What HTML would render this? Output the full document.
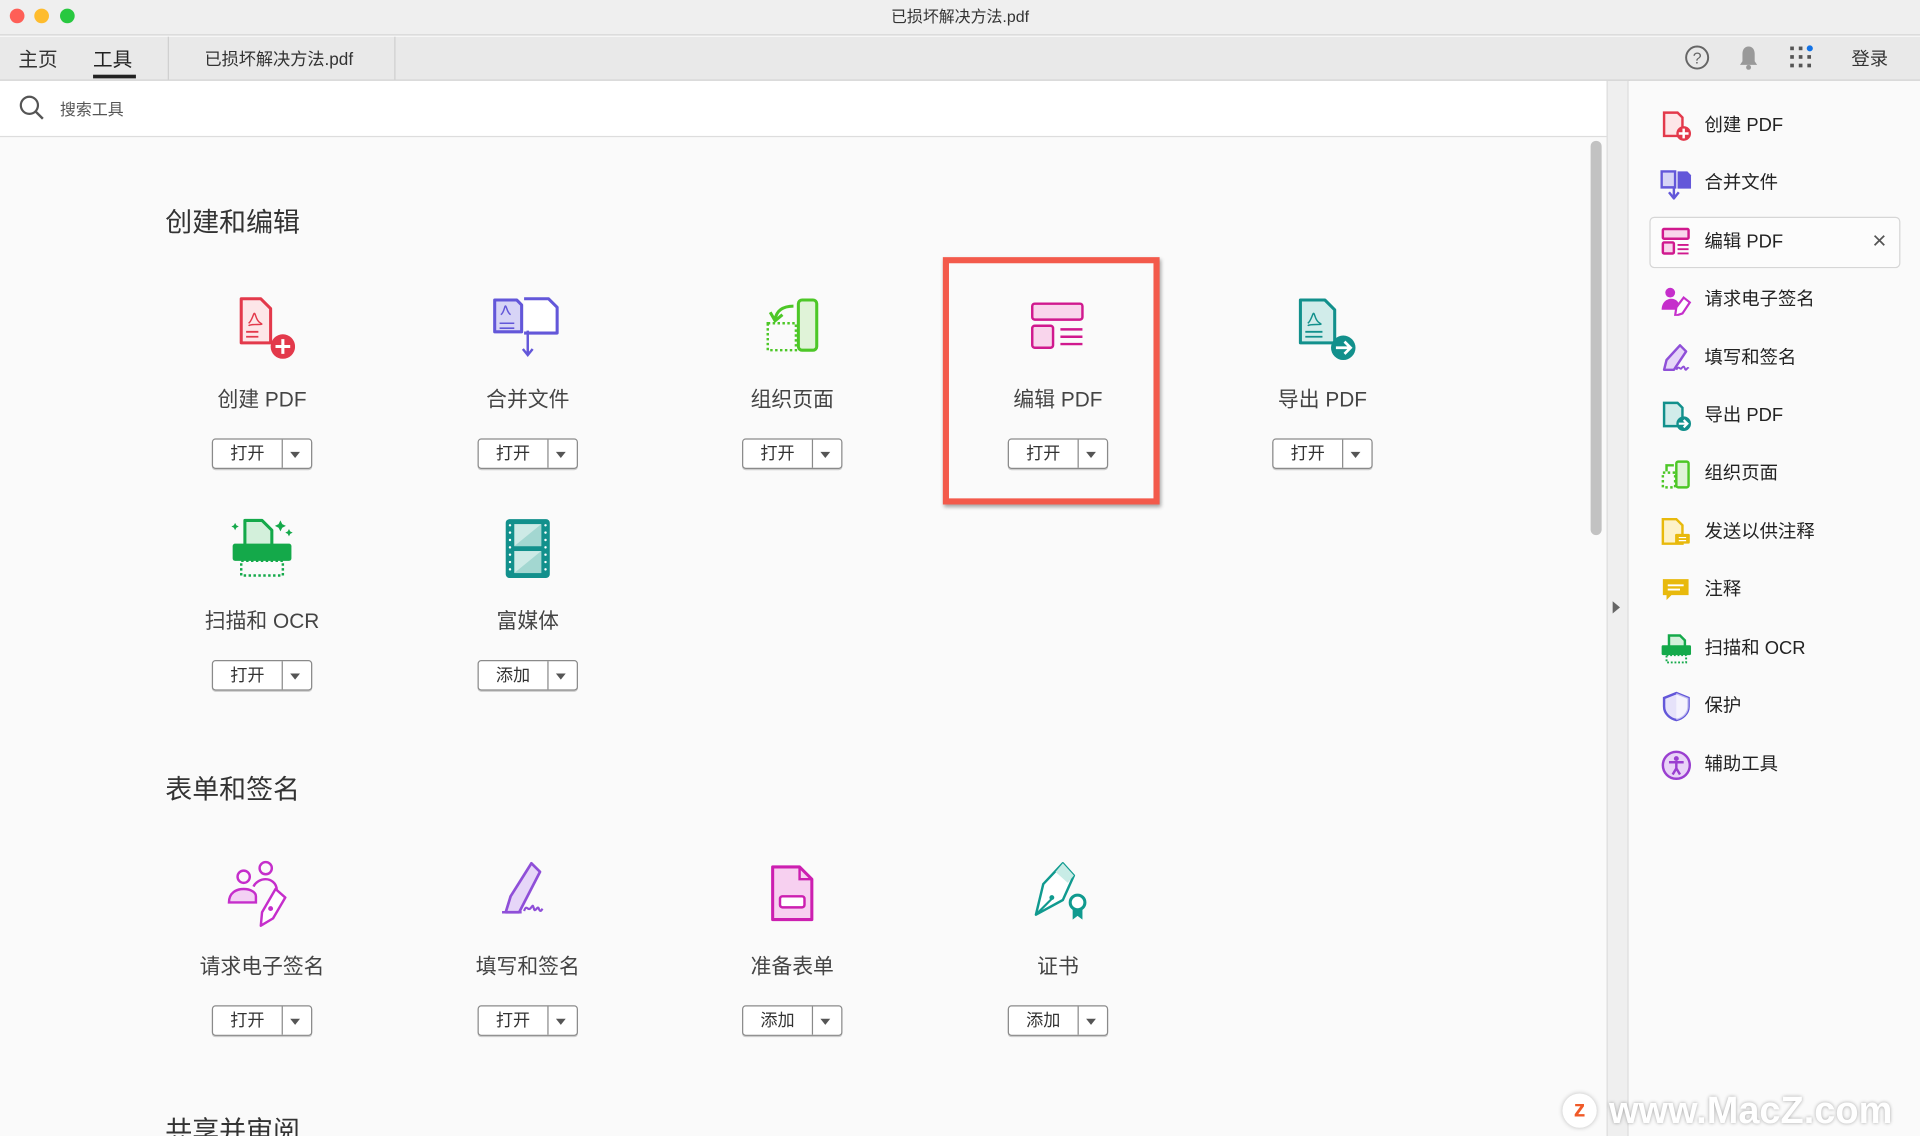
<!DOCTYPE html>
<html><head><meta charset="utf-8">
<style>
*{margin:0;padding:0;box-sizing:border-box}
html,body{width:1920px;height:1136px;overflow:hidden;background:#fafafa}
body{font-family:"Liberation Sans","Noto Sans CJK SC",sans-serif;color:#333}
#s{position:absolute;left:0;top:0;width:1568px;height:928px;transform:scale(1.22449);transform-origin:0 0;background:#fafafa;overflow:hidden}
.a{position:absolute;white-space:nowrap}
.lbl{position:absolute;width:200px;text-align:center;font-size:17px;color:#444;line-height:20px}
.btn{position:absolute;width:82px;height:25px;border:1px solid #8a8a8a;border-radius:3px;background:#fff;font-size:14px;color:#333;box-shadow:0 1px 0 #ccc}
.btn .t{position:absolute;left:0;top:0;width:57px;height:23px;line-height:22px;text-align:center;border-right:1px solid #8a8a8a}
.btn .d{position:absolute;left:63px;top:10px;width:0;height:0;border-left:4px solid transparent;border-right:4px solid transparent;border-top:5px solid #555}
.h{position:absolute;left:135px;font-size:22px;color:#333}
.ri{position:absolute;left:1356px;width:26px;height:26px}
.rt{position:absolute;left:1392px;font-size:15px;color:#222;line-height:18px}
</style></head><body><div id="s">
<div class="a" style="left:0;top:0;width:1568px;height:29px;background:#efefef;border-bottom:1px solid #d4d4d4"></div>
<div class="a" style="left:8px;top:7px;width:12px;height:12px;border-radius:6px;background:#fe5f57"></div>
<div class="a" style="left:28px;top:7px;width:12px;height:12px;border-radius:6px;background:#febc2e"></div>
<div class="a" style="left:49px;top:7px;width:12px;height:12px;border-radius:6px;background:#28c840"></div>
<div class="a" style="left:0;top:5px;width:1568px;text-align:center;font-size:13px;color:#333;line-height:17px">已损坏解决方法.pdf</div>
<div class="a" style="left:0;top:30px;width:1568px;height:36px;background:#e9e9e9;border-bottom:1px solid #cfcfcf"></div>
<div class="a" style="left:15px;top:35px;font-size:16px;color:#333">主页</div>
<div class="a" style="left:76px;top:35px;font-size:16px;color:#222">工具</div>
<div class="a" style="left:76px;top:61px;width:35px;height:3px;background:#222"></div>
<div class="a" style="left:137px;top:30px;width:1px;height:35px;background:#cfcfcf"></div>
<div class="a" style="left:167px;top:38px;font-size:14px;color:#333">已损坏解决方法.pdf</div>
<div class="a" style="left:322px;top:30px;width:1px;height:35px;background:#cfcfcf"></div>
<svg class="a" style="left:1375px;top:36px" width="22" height="22"><circle cx="11" cy="11" r="9" fill="none" stroke="#666" stroke-width="1.6"/><text x="11" y="16" font-size="13" text-anchor="middle" fill="#666" font-family="Liberation Sans">?</text></svg>
<svg class="a" style="left:1419px;top:36px" width="18" height="22"><path d="M9 2c-3.5 0-5 3-5 6v6l-2 3h14l-2-3V8c0-3-1.5-6-5-6z" fill="#999"/><circle cx="9" cy="19" r="2" fill="#999"/></svg>
<svg class="a" style="left:1461px;top:37px" width="22" height="20"><g fill="#555"><rect x="1" y="1" width="3" height="3"/><rect x="8" y="1" width="3" height="3"/><rect x="1" y="8" width="3" height="3"/><rect x="8" y="8" width="3" height="3"/><rect x="15" y="8" width="3" height="3"/><rect x="1" y="15" width="3" height="3"/><rect x="8" y="15" width="3" height="3"/><rect x="15" y="15" width="3" height="3"/></g><circle cx="17" cy="2.5" r="2.5" fill="#1473e6"/></svg>
<div class="a" style="left:1512px;top:37px;font-size:15px;color:#333">登录</div>
<div class="a" style="left:0;top:66px;width:1312px;height:46px;background:#fff;border-bottom:1px solid #ddd"></div>
<svg class="a" style="left:15px;top:77px" width="22" height="22"><circle cx="9" cy="9" r="7" fill="none" stroke="#555" stroke-width="1.8"/><path d="M14 14l6 6" stroke="#555" stroke-width="2"/></svg>
<div class="a" style="left:49px;top:79px;font-size:13px;color:#555">搜索工具</div>
<div class="a" style="left:1299px;top:115px;width:9px;height:322px;border-radius:5px;background:#c2c2c2"></div>
<div class="a" style="left:1312px;top:66px;width:18px;height:862px;background:#efefef;border-left:1px solid #ddd;border-right:1px solid #ddd"></div>
<div class="a" style="left:1317px;top:491px;width:0;height:0;border-top:5px solid transparent;border-bottom:5px solid transparent;border-left:6px solid #666"></div>
<div class="a" style="left:1331px;top:66px;width:237px;height:862px;background:#fafafa"></div>

<div class="h" style="top:164px">创建和编辑</div>
<div class="h" style="top:627px">表单和签名</div>
<div class="h" style="top:906px">共享并审阅</div>

<svg class="a" style="left:189px;top:240px" width="52" height="56"><path d="M8 4h16l8 8v28H8z" fill="#fde6e8" stroke="#e3394b" stroke-width="2.5" stroke-linejoin="round"/><path d="M14 24c3-2 4-9 5-8s1 6 5 8-8 0-10 2" fill="none" stroke="#e3394b" stroke-width="1.2"/><path d="M12 31h10M12 35h10" stroke="#e3394b" stroke-width="1.5"/><circle cx="42" cy="43" r="10" fill="#e3394b"/><path d="M42 37v12M36 43h12" stroke="#fff" stroke-width="2.5"/></svg>
<svg class="a" style="left:401px;top:240px" width="60" height="56"><path d="M3 5h18l4 4v22H3z" fill="#d7d4f6" stroke="#6357d9" stroke-width="2.5" stroke-linejoin="round"/><path d="M8 17c3-2 3-8 4-7s1 5 4 7" fill="none" stroke="#6357d9" stroke-width="1.2"/><path d="M7 24h12M7 28h12" stroke="#6357d9" stroke-width="1.3"/><path d="M27 4h20l7 7v21H27" fill="#fff" stroke="#6357d9" stroke-width="2.5" stroke-linejoin="round"/><path d="M30 30v19M26 45l4 5 4-5" fill="none" stroke="#6357d9" stroke-width="2"/></svg>
<svg class="a" style="left:622px;top:242px" width="50" height="48"><rect x="30" y="3" width="15" height="41" rx="3" fill="#e0f3d8" stroke="#4dc727" stroke-width="2.5"/><rect x="5" y="22" width="23" height="22" fill="none" stroke="#4dc727" stroke-width="2" stroke-dasharray="2 2"/><path d="M26 8c-9 0-14 4-15 11M7 13l4 7 6-5" fill="none" stroke="#4dc727" stroke-width="2.5"/></svg>
<svg class="a" style="left:839px;top:244px" width="50" height="44"><rect x="4" y="4" width="41" height="13" rx="2" fill="#f9d5ec" stroke="#d0198e" stroke-width="2"/><rect x="4" y="22" width="17" height="18" rx="2" fill="#f9d5ec" stroke="#d0198e" stroke-width="2"/><path d="M27 25h18M27 31h18M27 37h18" stroke="#d0198e" stroke-width="2"/></svg>
<svg class="a" style="left:1056px;top:240px" width="56" height="56"><path d="M6 5h20l8 8v27H6z" fill="#d1ecea" stroke="#12908c" stroke-width="2.5" stroke-linejoin="round"/><path d="M12 24c3-2 4-9 5-8s1 6 5 8-8 0-10 2" fill="none" stroke="#12908c" stroke-width="1.2"/><path d="M10 31h14M10 35h14" stroke="#12908c" stroke-width="1.5"/><circle cx="41" cy="44" r="10" fill="#12908c"/><path d="M35 44h11M42 39l5 5-5 5" fill="none" stroke="#fff" stroke-width="2.2"/></svg>
<svg class="a" style="left:186px;top:418px" width="56" height="56"><path d="M14 7h14l8 8v14H14z" fill="#d3f0db" stroke="#14a94a" stroke-width="2.5" stroke-linejoin="round"/><rect x="4" y="26" width="48" height="14" rx="2" fill="#14a94a"/><rect x="11" y="40" width="34" height="12" fill="none" stroke="#14a94a" stroke-width="2" stroke-dasharray="2 2"/><path d="M6 9l1 2 2 1-2 1-1 2-1-2-2-1 2-1zM43 7l1.5 3 3 1.5-3 1.5-1.5 3-1.5-3-3-1.5 3-1.5zM50 14l1 2 2 1-2 1-1 2-1-2-2-1 2-1z" fill="#14a94a"/></svg>
<svg class="a" style="left:411px;top:421px" width="40" height="52"><rect x="2" y="3" width="36" height="48" rx="3" fill="#12908c"/><rect x="9" y="7" width="22" height="18" fill="#cdeae6"/><rect x="9" y="29" width="22" height="18" fill="#cdeae6"/><path d="M9 25L31 7v18zM9 47L31 29v18z" fill="#a3d7d1"/><g fill="#fff"><circle cx="5.5" cy="8" r="1"/><circle cx="5.5" cy="14" r="1"/><circle cx="5.5" cy="20" r="1"/><circle cx="5.5" cy="26" r="1"/><circle cx="5.5" cy="32" r="1"/><circle cx="5.5" cy="38" r="1"/><circle cx="5.5" cy="44" r="1"/><circle cx="34.5" cy="8" r="1"/><circle cx="34.5" cy="14" r="1"/><circle cx="34.5" cy="20" r="1"/><circle cx="34.5" cy="26" r="1"/><circle cx="34.5" cy="32" r="1"/><circle cx="34.5" cy="38" r="1"/><circle cx="34.5" cy="44" r="1"/></g></svg>
<svg class="a" style="left:185px;top:700px" width="58" height="60"><circle cx="14" cy="16" r="5" fill="none" stroke="#c52ecb" stroke-width="2"/><path d="M2 37c0-8 6-11 12-11s10 3 10 6v5z" fill="#f3d1f4" stroke="#c52ecb" stroke-width="2"/><circle cx="32" cy="9" r="5" fill="none" stroke="#c52ecb" stroke-width="2"/><path d="M22 24c2-4 6-6 10-6s9 3 9 9" fill="none" stroke="#c52ecb" stroke-width="2"/><path d="M40 26l8 7-10 17-10 6 1-11z" fill="#fff" stroke="#c52ecb" stroke-width="2" stroke-linejoin="round"/><circle cx="36" cy="42" r="2" fill="#c52ecb"/></svg>
<svg class="a" style="left:406px;top:702px" width="50" height="52"><path d="M28 3l7 7-17 33H7l4-13z" fill="#e6d6f8" stroke="#8f4fd8" stroke-width="2.2" stroke-linejoin="round"/><path d="M4 43h16" stroke="#8f4fd8" stroke-width="2"/><path d="M22 42c2-6 3 0 5-2s2-4 3 0 3-3 4 0 2 2 3 0" fill="none" stroke="#8f4fd8" stroke-width="1.8"/></svg>
<svg class="a" style="left:626px;top:705px" width="44" height="50"><path d="M5 3h22l10 10v33H5z" fill="#f7d0f0" stroke="#cc1fb0" stroke-width="2.5" stroke-linejoin="round"/><path d="M27 3v10h10" fill="none" stroke="#cc1fb0" stroke-width="2"/><rect x="11" y="27" width="20" height="9" rx="2" fill="#fff" stroke="#cc1fb0" stroke-width="2"/></svg>
<svg class="a" style="left:838px;top:702px" width="54" height="52"><path d="M30 3l9 10-9 20-22 12 6-25z" fill="#fff" stroke="#109a8f" stroke-width="2" stroke-linejoin="round"/><path d="M30 3l9 10-5 6-10-9z" fill="#c8ece6"/><path d="M8 45l13-13" stroke="#109a8f" stroke-width="1.8"/><circle cx="21" cy="31" r="2" fill="#109a8f"/><circle cx="42" cy="35" r="6" fill="#fff" stroke="#109a8f" stroke-width="2.5"/><path d="M38 40v9l4-3 4 3v-9" fill="#109a8f"/></svg>

<div class="lbl" style="left:114px;top:317px">创建 PDF</div>
<div class="lbl" style="left:331px;top:317px">合并文件</div>
<div class="lbl" style="left:547px;top:317px">组织页面</div>
<div class="lbl" style="left:764px;top:317px">编辑 PDF</div>
<div class="lbl" style="left:980px;top:317px">导出 PDF</div>
<div class="btn" style="left:173px;top:358px"><div class="t">打开</div><div class="d"></div></div>
<div class="btn" style="left:390px;top:358px"><div class="t">打开</div><div class="d"></div></div>
<div class="btn" style="left:606px;top:358px"><div class="t">打开</div><div class="d"></div></div>
<div class="btn" style="left:823px;top:358px"><div class="t">打开</div><div class="d"></div></div>
<div class="btn" style="left:1039px;top:358px"><div class="t">打开</div><div class="d"></div></div>
<div class="lbl" style="left:114px;top:498px">扫描和 OCR</div>
<div class="lbl" style="left:331px;top:498px">富媒体</div>
<div class="btn" style="left:173px;top:539px"><div class="t">打开</div><div class="d"></div></div>
<div class="btn" style="left:390px;top:539px"><div class="t">添加</div><div class="d"></div></div>
<div class="lbl" style="left:114px;top:780px">请求电子签名</div>
<div class="lbl" style="left:331px;top:780px">填写和签名</div>
<div class="lbl" style="left:547px;top:780px">准备表单</div>
<div class="lbl" style="left:764px;top:780px">证书</div>
<div class="btn" style="left:173px;top:821px"><div class="t">打开</div><div class="d"></div></div>
<div class="btn" style="left:390px;top:821px"><div class="t">打开</div><div class="d"></div></div>
<div class="btn" style="left:606px;top:821px"><div class="t">添加</div><div class="d"></div></div>
<div class="btn" style="left:823px;top:821px"><div class="t">添加</div><div class="d"></div></div>

<div class="a" style="left:770px;top:210px;width:177px;height:202px;border:5px solid #f35a4b;box-shadow:1px 2px 3px rgba(0,0,0,.35)"></div>

<div class="a" style="left:1347px;top:177px;width:205px;height:42px;border:1px solid #d6d6d6;border-radius:4px;background:#fcfcfc"></div>
<div class="a" style="left:1529px;top:186px;font-size:20px;color:#555">×</div>
<svg class="ri" style="top:90px"><path d="M3 2h11l4 4v15H3z" fill="#fde6e8" stroke="#e3394b" stroke-width="2"/><circle cx="19" cy="19" r="6" fill="#e3394b"/><path d="M19 15v8M15 19h8" stroke="#fff" stroke-width="2"/></svg>
<svg class="ri" style="top:137px"><path d="M1 3h11v13H1z" fill="#d7d4f6" stroke="#6357d9" stroke-width="2"/><path d="M14 3h8l3 3v11H14z" fill="#6357d9"/><path d="M11 16v8M7 20l4 5 4-5" fill="none" stroke="#6357d9" stroke-width="2"/></svg>
<svg class="ri" style="top:185px"><rect x="2" y="2" width="21" height="8" rx="1" fill="#f9d5ec" stroke="#d0198e" stroke-width="2"/><rect x="2" y="13" width="9" height="9" rx="1" fill="#f9d5ec" stroke="#d0198e" stroke-width="2"/><path d="M14 15h9M14 18.5h9M14 22h9" stroke="#d0198e" stroke-width="1.5"/></svg>
<svg class="ri" style="top:232px"><circle cx="8" cy="7" r="4" fill="#c52ecb"/><path d="M1 21c0-6 4-9 8-9s7 3 7 9z" fill="#c52ecb"/><path d="M19 11l5 4-6 9-6 2 1-7z" fill="#fff" stroke="#c52ecb" stroke-width="1.8"/></svg>
<svg class="ri" style="top:280px"><path d="M16 2l5 5-10 15H3l2-8z" fill="#e6d6f8" stroke="#8f4fd8" stroke-width="2" stroke-linejoin="round"/><path d="M13 22c2-4 3 0 4-1s2-3 3 0 2-2 3 0" fill="none" stroke="#8f4fd8" stroke-width="1.6"/></svg>
<svg class="ri" style="top:327px"><path d="M3 2h11l4 4v15H3z" fill="#d1ecea" stroke="#12908c" stroke-width="2"/><circle cx="19" cy="19" r="6" fill="#12908c"/><path d="M15 19h7M19 16l3 3-3 3" fill="none" stroke="#fff" stroke-width="1.8"/></svg>
<svg class="ri" style="top:374px"><rect x="13" y="3" width="10" height="21" rx="1.5" fill="#e0f3d8" stroke="#4dc727" stroke-width="2"/><rect x="2" y="12" width="10" height="12" fill="none" stroke="#4dc727" stroke-width="2" stroke-dasharray="2 2"/><path d="M11 6H5v5" fill="none" stroke="#4dc727" stroke-width="2"/></svg>
<svg class="ri" style="top:422px"><path d="M2 2h11l5 5v15H2z" fill="#fdf2c9" stroke="#e8b90c" stroke-width="2"/><rect x="12" y="14" width="12" height="8" rx="1" fill="#e8b90c"/><path d="M15 17h6M15 19.5h6" stroke="#fff" stroke-width="1"/></svg>
<svg class="ri" style="top:469px"><path d="M2 4h21v13H9l-4 4v-4H2z" fill="#e8b90c"/><path d="M6 9h13M6 12.5h10" stroke="#fff" stroke-width="1.5"/></svg>
<svg class="ri" style="top:517px"><path d="M7 2h9l4 4v6H7z" fill="#d3f0db" stroke="#14a94a" stroke-width="2"/><rect x="1" y="10" width="24" height="8" rx="1" fill="#14a94a"/><rect x="5" y="18" width="16" height="6" fill="none" stroke="#14a94a" stroke-width="1.6" stroke-dasharray="1.5 1.5"/></svg>
<svg class="ri" style="top:564px"><path d="M13 2l10 4v7c0 6-5 10-10 11C8 23 3 19 3 13V6z" fill="#e6e2fa" stroke="#6357d9" stroke-width="2"/><path d="M13 2v22c5-1 10-5 10-11V6z" fill="#fff" opacity=".6"/></svg>
<svg class="ri" style="top:612px"><circle cx="13" cy="13" r="11" fill="#e9d3f7" stroke="#9a3fd0" stroke-width="2"/><circle cx="13" cy="7.5" r="2" fill="#9a3fd0"/><path d="M7 10.5h12M13 10.5v5l-3 5M13 15.5l3 5" fill="none" stroke="#9a3fd0" stroke-width="2"/></svg>
<div class="rt" style="top:94px">创建 PDF</div>
<div class="rt" style="top:141px">合并文件</div>
<div class="rt" style="top:189px">编辑 PDF</div>
<div class="rt" style="top:236px">请求电子签名</div>
<div class="rt" style="top:284px">填写和签名</div>
<div class="rt" style="top:331px">导出 PDF</div>
<div class="rt" style="top:378px">组织页面</div>
<div class="rt" style="top:426px">发送以供注释</div>
<div class="rt" style="top:473px">注释</div>
<div class="rt" style="top:521px">扫描和 OCR</div>
<div class="rt" style="top:568px">保护</div>
<div class="rt" style="top:616px">辅助工具</div>

<div class="a" style="left:1276px;top:893px;width:28px;height:28px;border-radius:14px;background:#fff;box-shadow:0 0 4px rgba(0,0,0,.25);text-align:center;font:bold 19px/28px 'Liberation Sans',sans-serif;color:#f05a28">z</div>
<div class="a" style="left:1314px;top:890px;font:bold 31px/34px 'Liberation Sans',sans-serif;color:#fff;text-shadow:0 0 3px rgba(0,0,0,.35)">www.MacZ.com</div>
</div></body></html>
